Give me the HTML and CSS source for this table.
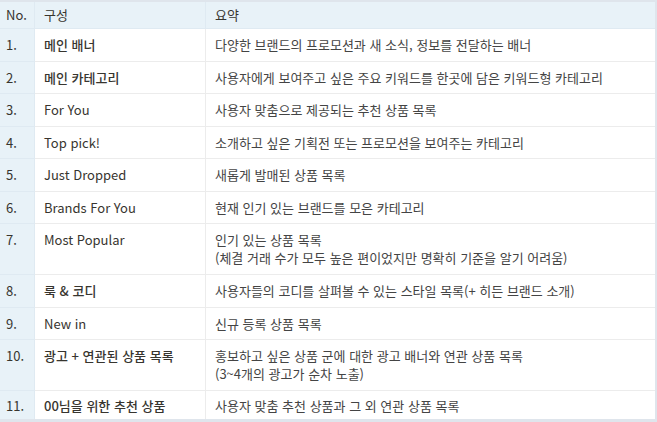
FILE: index.html
```html
<!DOCTYPE html>
<html lang="ko">
<head>
<meta charset="utf-8">
<link rel="stylesheet" href="styles.css">
</head>
<body>
<div class="frame">
<table class="spec">
  <thead>
    <tr><th class="no">No.</th><th class="name">구성</th><th class="desc">요약</th></tr>
  </thead>
  <tbody>
    <tr><td class="no">1.</td><td class="name ko">메인 배너</td><td class="desc">다양한 브랜드의 프로모션과 새 소식, 정보를 전달하는 배너</td></tr>
    <tr><td class="no">2.</td><td class="name ko">메인 카테고리</td><td class="desc">사용자에게 보여주고 싶은 주요 키워드를 한곳에 담은 키워드형 카테고리</td></tr>
    <tr><td class="no">3.</td><td class="name">For You</td><td class="desc">사용자 맞춤으로 제공되는 추천 상품 목록</td></tr>
    <tr><td class="no">4.</td><td class="name">Top pick!</td><td class="desc">소개하고 싶은 기획전 또는 프로모션을 보여주는 카테고리</td></tr>
    <tr><td class="no">5.</td><td class="name">Just Dropped</td><td class="desc">새롭게 발매된 상품 목록</td></tr>
    <tr><td class="no">6.</td><td class="name">Brands For You</td><td class="desc">현재 인기 있는 브랜드를 모은 카테고리</td></tr>
    <tr class="two"><td class="no">7.</td><td class="name">Most Popular</td><td class="desc">인기 있는 상품 목록<br>(체결 거래 수가 모두 높은 편이었지만 명확히 기준을 알기 어려움)</td></tr>
    <tr><td class="no">8.</td><td class="name ko">룩 &amp; 코디</td><td class="desc">사용자들의 코디를 살펴볼 수 있는 스타일 목록(+ 히든 브랜드 소개)</td></tr>
    <tr><td class="no">9.</td><td class="name">New in</td><td class="desc">신규 등록 상품 목록</td></tr>
    <tr class="two"><td class="no">10.</td><td class="name ko">광고 + 연관된 상품 목록</td><td class="desc">홍보하고 싶은 상품 군에 대한 광고 배너와 연관 상품 목록<br>(3~4개의 광고가 순차 노출)</td></tr>
    <tr class="last"><td class="no">11.</td><td class="name ko">00님을 위한 추천 상품</td><td class="desc">사용자 맞춤 추천 상품과 그 외 연관 상품 목록</td></tr>
  </tbody>
</table>
</div>
</body>
</html>
```

FILE: styles.css
```css
html, body {
  margin: 0;
  padding: 0;
  background: #dfe5ec;
}
body {
  width: 657px;
  height: 422px;
  overflow: hidden;
  font-family: "Noto Sans CJK KR", "Noto Sans", sans-serif;
  font-size: 13px;
  color: #37352f;
}
.frame {
  padding: 2px 2px 0 0;
}
.spec {
  width: 655px;
  border-collapse: collapse;
  background: #ffffff;
  table-layout: fixed;
}
.spec th, .spec td {
  text-align: left;
  vertical-align: top;
  line-height: 18px;
  padding: 7px 8px 6.5px 8px;
  border-bottom: 1px solid #ececec;
  border-right: 1px solid #ececec;
  white-space: nowrap;
}
.spec th {
  font-weight: 400;
  background: #e8f2f8;
  padding-top: 4px;
  padding-bottom: 4px;
  border-bottom-color: #dfeaf2;
  border-right-color: #dfeaf2;
}
.spec th.no, .spec td.no {
  width: 19px;
  padding-left: 6px;
  padding-right: 9px;
  background: #e8f2f8;
  border-right-color: #dfeaf2;
  border-bottom-color: #dfeaf2;
}
.spec .name {
  width: 153px;
  padding-left: 9px;
}
.spec .desc {
  padding-left: 9px;
  border-right: none;
  color: #444;
}
.spec th.desc { color: #37352f; }
.spec td.ko {
  font-weight: 500;
}
.spec tr.two td {
  padding-bottom: 7px;
}
.spec tr.last td {
  padding-top: 6px;
  padding-bottom: 4px;
  border-bottom: none;
}
```
